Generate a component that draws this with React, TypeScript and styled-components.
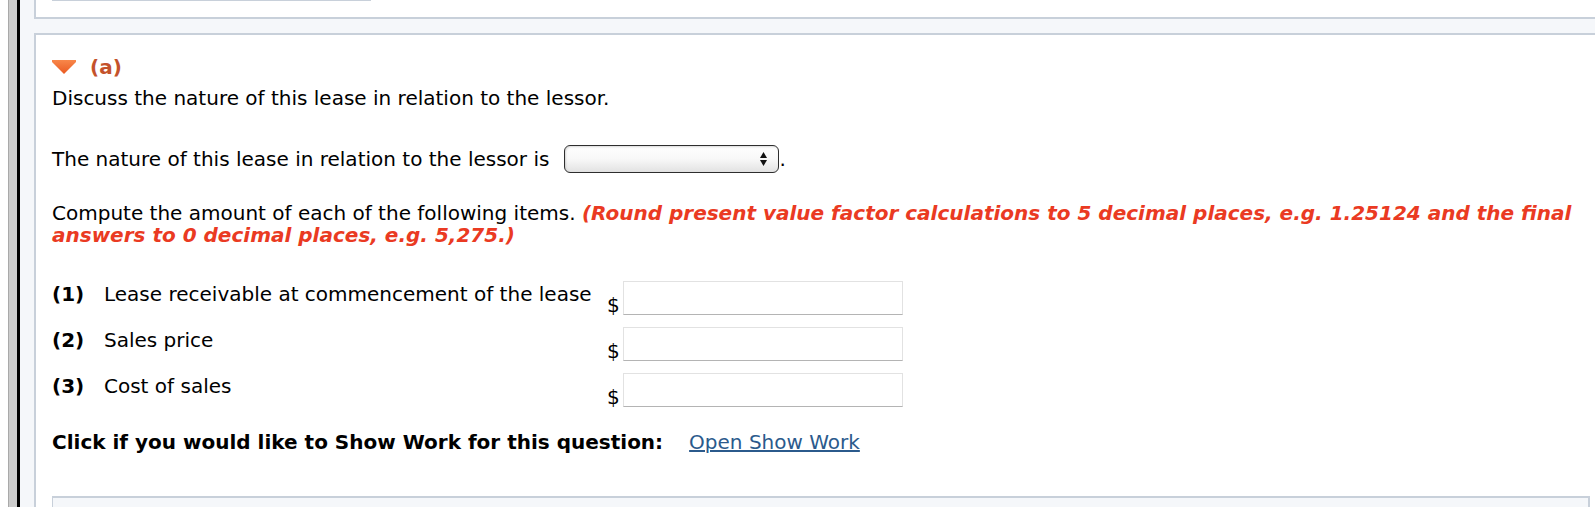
import React from "react";
import styled, { createGlobalStyle } from "styled-components";

const GlobalStyle = createGlobalStyle`
  html, body {
    margin: 0;
    padding: 0;
    background: #ffffff;
    overflow: hidden;
  }
  body {
    font-family: "DejaVu Sans", Verdana, sans-serif;
    font-size: 20px;
    color: #000;
  }
`;

const Page = styled.div`
  display: flex;
  height: 507px;
  padding-left: 8px;
`;

const Rail = styled.div`
  width: 8px;
  flex: none;
  background: #cccccc;
  border-left: 1px solid #a9a9a9;
  border-right: 3px solid #000000;
`;

const Main = styled.div`
  flex: 1;
  display: flex;
  flex-direction: column;
  gap: 14px;
  background: #f5f7fa;
  padding-left: 14px;
`;

const PrevCard = styled.div`
  background: #fff;
  border-left: 2px solid #c8d0da;
  border-bottom: 2px solid #c8d0da;
  padding: 0 0 16px 16px;
`;

const PrevStub = styled.div`
  width: 319px;
  border-bottom: 1px solid #c8d0da;
`;

const Card = styled.div`
  flex: 1;
  background: #fff;
  border-top: 2px solid #c8d0da;
  border-left: 2px solid #c8d0da;
  margin-right: -12px;
  padding: 20px 17px 0 16px;
  display: flex;
  flex-direction: column;
`;

const Heading = styled.div`
  display: flex;
  align-items: center;
  gap: 14px;
  height: 24px;
  line-height: 24px;
  font-weight: bold;
  color: #c4522b;
`;

const Line = styled.div<{ $top: number; $lh?: number }>`
  margin-top: ${(p) => p.$top}px;
  line-height: ${(p) => p.$lh ?? 24}px;
`;

const SelectRow = styled.div`
  margin-top: 35px;
  display: flex;
  align-items: center;
  height: 28px;
  line-height: 24px;
`;

const SelectWrap = styled.span`
  position: relative;
  display: inline-block;
  margin-left: 15px;
  width: 215px;
  height: 28px;
`;

const Select = styled.select`
  appearance: none;
  -webkit-appearance: none;
  width: 215px;
  height: 28px;
  box-sizing: border-box;
  border: 1px solid #2e2e2e;
  border-radius: 6px;
  background: linear-gradient(#ffffff 0%, #f8f8f8 50%, #e2e2e2 100%);
  box-shadow: inset 1px 1px 2px rgba(0, 0, 0, 0.15);
  font: inherit;
`;

const Arrows = styled.svg`
  position: absolute;
  right: 12px;
  top: 7px;
  pointer-events: none;
`;

const Warn = styled.span`
  color: #ea3a22;
  font-weight: bold;
  font-style: italic;
`;

const Items = styled.div`
  margin-top: 35px;
  display: flex;
  flex-direction: column;
  gap: 12px;
`;

const ItemRow = styled.div`
  display: flex;
  align-items: flex-start;
  height: 34px;
`;

const ItemLabel = styled.div`
  width: 555px;
  display: flex;
  gap: 16px;
  padding-top: 1px;
  line-height: 24px;
`;

const Num = styled.span`
  font-weight: bold;
  width: 36px;
  flex: none;
`;

const Amount = styled.div`
  display: flex;
  align-items: flex-end;
  height: 34px;
`;

const Dollar = styled.span`
  line-height: 20px;
  width: 16px;
`;

const Input = styled.input`
  box-sizing: border-box;
  width: 280px;
  height: 34px;
  margin: 0;
  border: 1px solid #e2e2e2;
  border-bottom: 1px solid #b4b4b4;
  background: #fff;
  font: inherit;
`;

const ShowWork = styled.div`
  margin-top: 23px;
  line-height: 24px;
  font-weight: bold;
  display: flex;
`;

const Link = styled.a`
  margin-left: 26px;
  font-weight: normal;
  color: #2b5a8c;
  text-decoration: underline;
`;

const NextBox = styled.div`
  margin-top: 42px;
  flex: 1;
  background: #f5f7fa;
  border-top: 2px solid #c8d0da;
  border-left: 1px solid #c8d0da;
  border-right: 2px solid #c8d0da;
`;

const Caret = () => (
  <svg width="24" height="14" viewBox="0 0 24 14">
    <defs>
      <linearGradient id="cg" x1="0" y1="0" x2="0" y2="1">
        <stop offset="0" stopColor="#f8874a" />
        <stop offset="1" stopColor="#ea5a22" />
      </linearGradient>
    </defs>
    <path d="M0 0 H24 V2 L12 14 L0 2 Z" fill="url(#cg)" />
  </svg>
);

const items = [
  { n: "(1)", label: "Lease receivable at commencement of the lease" },
  { n: "(2)", label: "Sales price" },
  { n: "(3)", label: "Cost of sales" },
];

export default function App() {
  return (
    <>
      <GlobalStyle />
      <Page>
        <Rail />
        <Main>
          <PrevCard>
            <PrevStub />
          </PrevCard>
          <Card>
            <Heading>
              <Caret />
              <span>(a)</span>
            </Heading>
            <Line $top={7}>Discuss the nature of this lease in relation to the lessor.</Line>
            <SelectRow>
              <span>The nature of this lease in relation to the lessor is</span>
              <SelectWrap>
                <Select defaultValue="">
                  <option value=""></option>
                </Select>
                <Arrows width="7" height="14" viewBox="0 0 7 14">
                  <path d="M3.5 0 L7 6 H0 Z" fill="#111" />
                  <path d="M0 8 H7 L3.5 14 Z" fill="#111" />
                </Arrows>
              </SelectWrap>
              <span>.</span>
            </SelectRow>
            <Line $top={29} $lh={22}>
              Compute the amount of each of the following items.{" "}
              <Warn>
                (Round present value factor calculations to 5 decimal places, e.g. 1.25124 and the final
                <br />
                answers to 0 decimal places, e.g. 5,275.)
              </Warn>
            </Line>
            <Items>
              {items.map((it) => (
                <ItemRow key={it.n}>
                  <ItemLabel>
                    <Num>{it.n}</Num>
                    <span>{it.label}</span>
                  </ItemLabel>
                  <Amount>
                    <Dollar>$</Dollar>
                    <Input type="text" />
                  </Amount>
                </ItemRow>
              ))}
            </Items>
            <ShowWork>
              <span>Click if you would like to Show Work for this question:</span>
              <Link href="#">Open Show Work</Link>
            </ShowWork>
            <NextBox />
          </Card>
        </Main>
      </Page>
    </>
  );
}
